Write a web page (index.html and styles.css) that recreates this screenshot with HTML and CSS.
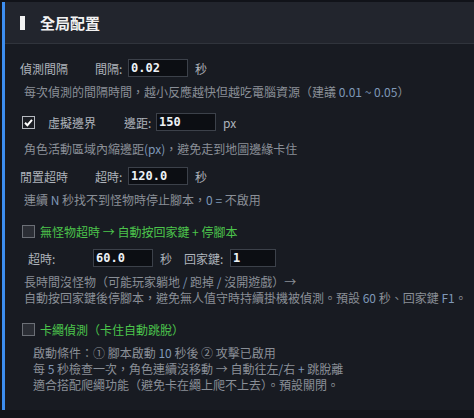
FILE: index.html
```html
<!DOCTYPE html>
<html lang="zh-Hant">
<head>
    <meta charset="UTF-8">
    <meta name="viewport" content="width=device-width, initial-scale=1.0">
    <title>全局配置</title>
    <link rel="stylesheet" href="styles.css">
</head>
<body>
    <div class="panel">
        <!-- Header -->
        <div class="panel-head">
            <span class="head-bar"></span>
            <h2 class="head-title">全局配置</h2>
        </div>

        <div class="panel-body">
            <!-- Detect interval -->
            <div class="row">
                <span class="label">偵測間隔</span>
                <span class="key">間隔:</span>
                <input type="text" class="num-input" value="0.02">
                <span class="unit">秒</span>
            </div>
            <p class="desc">每次偵測的間隔時間，越小反應越快但越吃電腦資源（建議 <span class="num">0.01 ~ 0.05</span>）</p>

            <!-- Virtual border -->
            <div class="row row-gap">
                <span class="check is-checked">
                    <svg viewBox="0 0 13 13" width="13" height="13"><path d="M3 6.8 L5.4 9.2 L10 3.8" fill="none" stroke="#fff" stroke-width="2"/></svg>
                </span>
                <span class="label label-check">虛擬邊界</span>
                <span class="key key-short">邊距:</span>
                <input type="text" class="num-input" value="150">
                <span class="unit">px</span>
            </div>
            <p class="desc desc-loose">角色活動區域內縮邊距<span class="num">(px)</span>，避免走到地圖邊緣卡住</p>

            <!-- Idle timeout -->
            <div class="row row-gap-sm">
                <span class="label">閒置超時</span>
                <span class="key">超時:</span>
                <input type="text" class="num-input" value="120.0">
                <span class="unit">秒</span>
            </div>
            <p class="desc">連續 <span class="num">N</span> 秒找不到怪物時停止腳本，<span class="num">0 =</span> 不啟用</p>

            <!-- No monster timeout -->
            <div class="row row-toggle">
                <span class="check"></span>
                <span class="toggle-label">無怪物超時 → 自動按回家鍵 + 停腳本</span>
            </div>
            <div class="row row-sub">
                <span class="sub-label">超時:</span>
                <input type="text" class="num-input" value="60.0">
                <span class="unit">秒</span>
                <span class="sub-key">回家鍵:</span>
                <input type="text" class="num-input num-input-sm" value="1">
            </div>
            <p class="desc">長時間沒怪物（可能玩家躺地 <span class="num">/</span> 跑掉 <span class="num">/</span> 沒開遊戲）→<br>自動按回家鍵後停腳本，避免無人值守時持續掛機被偵測。預設 <span class="num">60</span> 秒、回家鍵 <span class="num">F1</span>。</p>

            <!-- Rope stuck detection -->
            <div class="row row-toggle">
                <span class="check"></span>
                <span class="toggle-label">卡繩偵測（卡住自動跳脫）</span>
            </div>
            <p class="desc desc-indent">啟動條件：① 腳本啟動 <span class="num">10</span> 秒後 ② 攻擊已啟用<br>每 <span class="num">5</span> 秒檢查一次，角色連續沒移動 → 自動往左<span class="num">/</span>右 <span class="num">+</span> 跳脫離<br>適合搭配爬繩功能（避免卡在繩上爬不上去）。預設關閉。</p>
        </div>
    </div>
</body>
</html>
```

FILE: styles.css
```css
body {
    margin: 0;
    padding: 2px 0 0 2px;
    background-color: #111319;
    color: #aeb3bb;
    font-family: "Noto Sans CJK TC", "Noto Sans", sans-serif;
    font-size: 12px;
}

.panel {
    background: #181b22;
    border-left: 3px solid #3d8ef0;
}

.panel-head {
    display: flex;
    align-items: center;
    height: 41px;
    padding-left: 15px;
    background: #22252d;
    border-bottom: 1px solid #30343c;
}

.head-bar {
    width: 5px;
    height: 14px;
    background: #f2f2f2;
}

.head-title {
    margin: 0 0 0 15px;
    font-size: 15px;
    font-weight: bold;
    color: #f2f2f2;
}

.panel-body {
    padding: 15px 0 17px 15px;
}

.row {
    display: flex;
    align-items: center;
    height: 18px;
    white-space: nowrap;
}

.row-gap {
    margin-top: 13px;
}

.row-gap-sm {
    margin-top: 10px;
}

.row-toggle {
    margin-top: 15px;
    height: 16px;
}

.row-sub {
    margin-top: 10px;
    margin-left: 8px;
}

.label {
    width: 75px;
}

.label-check {
    width: 76px;
    margin-left: 13px;
}

.key {
    width: 33px;
}

.key-short {
    width: 32px;
}

.sub-label {
    width: 65px;
}

.sub-key {
    width: 46px;
    margin-left: 12px;
}

.unit {
    margin-left: 7px;
}

.num-input {
    width: 60px;
    height: 18px;
    box-sizing: border-box;
    margin: 0;
    padding: 0 0 0 2px;
    background: #0c0e13;
    border: 1px solid #3c414a;
    border-radius: 0;
    color: #eef2f7;
    font-family: "DejaVu Sans Mono", monospace;
    font-size: 12px;
    font-weight: bold;
    outline: none;
}

.num-input-sm {
    width: 46px;
}

.check {
    display: flex;
    width: 13px;
    height: 13px;
    box-sizing: border-box;
    margin-left: 2px;
    background: #2b2e35;
    border: 1px solid #6b6f76;
}

.check svg {
    margin: -1px;
}

.check.is-checked {
    background: #1b1e24;
    border-color: #b5b9c0;
}

.toggle-label {
    margin-left: 5px;
    color: #4cc54c;
}

.desc {
    margin: 7px 0 0 4px;
    line-height: 16px;
    color: #8a8f97;
    white-space: nowrap;
}

.desc-loose {
    margin-top: 10px;
}

.desc-indent {
    margin-top: 8px;
    margin-left: 13px;
}

.num {
    color: #7f98b8;
}
```
